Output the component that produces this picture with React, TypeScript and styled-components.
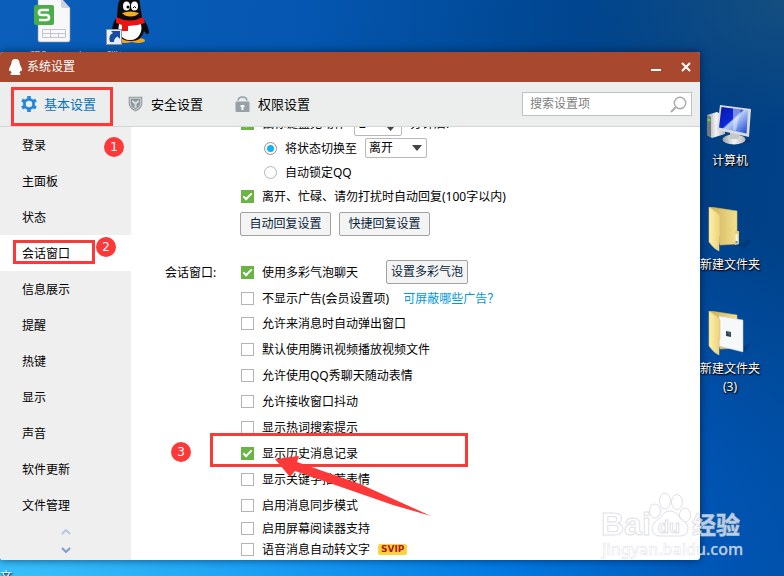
import React from 'react';
import styled, { createGlobalStyle, css } from 'styled-components';

const fontStack = '"Noto Sans", "Noto Sans CJK SC", sans-serif';
const red = '#fc3838';

const GlobalStyle = createGlobalStyle`
  *, *::before, *::after { box-sizing: border-box; }
  body {
    margin: 0;
    font-family: ${fontStack};
    font-size: 12px;
    line-height: 18px;
    color: #000;
  }
  button, input, select { font: inherit; color: inherit; }
  ul { list-style: none; margin: 0; padding: 0; }
`;

const Desktop = styled.div`
  position: relative;
  display: grid;
  grid-template-columns: minmax(0, 1fr) 84px;
  grid-template-rows: 52px auto minmax(16px, 1fr);
  min-height: 100vh;
  overflow: hidden;
  background:
    radial-gradient(ellipse 200px 130px at 100% 0%, rgba(50, 100, 120, 0.4) 0%, transparent 100%),
    radial-gradient(ellipse 130% 95% at 0% 103%, #3cc4fa 0%, #1a9ff5 26%, #0078e2 50%, rgba(0, 92, 196, 0.7) 72%, transparent 100%),
    linear-gradient(100deg, #0b5fba 0%, #0456b0 35%, #00458f 65%, #003f84 85%, #00438a 100%);
`;

const TopShortcuts = styled.div`
  display: flex;
  grid-column: 1 / -1;
  height: 52px;
  overflow: hidden;
`;

const TopShortcut = styled.div<{ $width: number }>`
  display: flex;
  flex: none;
  flex-direction: column;
  align-items: center;
  gap: 3px;
  width: ${(p) => p.$width}px;
  color: #fff;
  white-space: nowrap;
  svg { flex: none; }
`;

const SideShortcuts = styled.div`
  grid-column: 2;
  grid-row: 2;
  padding-top: 51px;
`;

const SideShortcut = styled.div`
  display: flex;
  flex-direction: column;
  align-items: center;
  gap: 1px;
  width: 60px;
  min-height: 104px;
  color: #fff;
  text-align: center;
  white-space: nowrap;
  text-shadow: 1px 1px 2px #000, 0 1px 1px #000;
`;

const BottomLabel = styled.div`
  grid-column: 1 / -1;
  height: 16px;
  padding-top: 8px;
  overflow: hidden;
  color: #fff;
  text-shadow: 1px 1px 2px #000;
`;

const Window = styled.main`
  grid-column: 1;
  grid-row: 2;
  display: flex;
  flex-direction: column;
  border-radius: 3px;
  overflow: hidden;
  background: #fff;
  box-shadow: 0 0 8px rgba(0, 10, 40, 0.6);
`;

const TitleBar = styled.header`
  display: flex;
  align-items: center;
  height: 30px;
  padding: 0 6px 0 8px;
  gap: 4px;
  background: #a8492f;
  color: #fff;
`;

const Title = styled.h1`
  flex: 1;
  margin: 0;
  font-size: 12px;
  font-weight: 400;
`;

const WindowButton = styled.button`
  display: grid;
  place-items: center;
  width: 16px;
  height: 16px;
  margin-left: 10px;
  padding: 0;
  border: 0;
  background: none;
`;

const TabBar = styled.nav`
  display: flex;
  align-items: center;
  gap: 32px;
  height: 45px;
  padding: 0 8px 0 21px;
  border-bottom: 1px solid #d4d6d6;
  background: #eceeee;
`;

const Tab = styled.button<{ $active?: boolean }>`
  display: flex;
  align-items: center;
  gap: 7px;
  padding: 0;
  border: 0;
  background: none;
  color: ${(p) => (p.$active ? '#0a72ba' : '#000')};
  font-size: 13px;
  white-space: nowrap;
`;

const Search = styled.label`
  display: flex;
  align-items: center;
  width: 170px;
  height: 24px;
  margin-left: auto;
  padding: 0 4px 0 7px;
  border: 1px solid #bfc1c1;
  background: #fff;
`;

const SearchInput = styled.input`
  flex: 1;
  min-width: 0;
  padding: 0;
  border: 0;
  outline: 0;
  background: none;
  &::placeholder { color: #808080; opacity: 1; }
`;

const Body = styled.div`
  display: flex;
  height: 433px;
`;

const Sidebar = styled.aside`
  flex: none;
  width: 131px;
  background: #efefef;
`;

const SideItem = styled.button<{ $active?: boolean }>`
  display: block;
  width: 100%;
  height: 36px;
  padding: 2px 22px 0;
  border: 0;
  background: ${(p) => (p.$active ? '#fff' : 'none')};
  text-align: left;
`;

const Scroller = styled.div`
  display: flex;
  flex-direction: column;
  align-items: center;
`;

const ScrollButton = styled.button`
  display: grid;
  place-items: center;
  width: 20px;
  height: 18px;
  padding: 0;
  border: 0;
  background: none;
`;

const Content = styled.section`
  display: flex;
  flex: 1;
  flex-direction: column;
  justify-content: flex-end;
  gap: 22px;
  min-width: 0;
  padding-left: 34px;
  overflow: hidden;
`;

const Group = styled.div`
  display: grid;
  grid-template-columns: 76px minmax(0, 1fr);
  margin: 0;
`;

const GroupLabel = styled.div`
  padding-top: 1px;
  line-height: 28px;
`;

const rowHeights = { tight: 20, compact: 22, small: 24, normal: 26, large: 28 };

const Row = styled.div<{ $size?: keyof typeof rowHeights; $indent?: boolean }>`
  display: flex;
  align-items: center;
  gap: 8px;
  height: ${(p) => rowHeights[p.$size ?? 'normal']}px;
  padding-left: ${(p) => (p.$indent ? 23 : 0)}px;
  white-space: nowrap;
`;

const ButtonRow = styled.div`
  display: flex;
  gap: 8px;
  padding-top: 4px;
  margin-left: -1px;
`;

const Choice = styled.label`
  display: flex;
  align-items: center;
  gap: 8px;
`;

const ChoiceText = styled.span`
  padding-top: 2px;
`;

const CheckInput = styled.input`
  display: grid;
  place-items: center;
  flex: none;
  width: 13px;
  height: 13px;
  margin: 0;
  border: 1px solid #b4b4b4;
  background: #fff;
  appearance: none;
  &:checked { border-color: #6ab344; background: #6ab344; }
  &:checked::after {
    content: '';
    width: 9px;
    height: 5px;
    border: solid #fff;
    border-width: 0 0 2px 2px;
    transform: translateY(-1px) rotate(-45deg);
  }
`;

const RadioInput = styled.input`
  display: grid;
  place-items: center;
  flex: none;
  width: 13px;
  height: 13px;
  margin: 0;
  border: 1px solid #b4b4b4;
  border-radius: 50%;
  background: #fff;
  appearance: none;
  &:checked { border-color: #909090; }
  &:checked::after {
    content: '';
    width: 7px;
    height: 7px;
    border-radius: 50%;
    background: #12b0f4;
  }
`;

const field = css`
  height: 20px;
  border: 1px solid #b8b8b8;
  border-radius: 2px;
  background: #fff;
`;

const FieldWrap = styled.span`
  position: relative;
  display: inline-flex;
  svg { position: absolute; pointer-events: none; }
`;

const Minutes = styled.input`
  ${field}
  width: 48px;
  height: 26px;
  padding: 0 4px;
`;

const StateSelect = styled.select`
  ${field}
  width: 62px;
  padding: 0 3px;
  line-height: 18px;
  appearance: none;
`;

const SpinArrow = styled.svg`
  right: 7px;
  bottom: 5px;
`;

const SelectArrow = styled.svg`
  right: 5px;
  top: 7px;
`;

const PushButton = styled.button<{ $wide?: boolean }>`
  height: 24px;
  min-width: ${(p) => (p.$wide ? 91 : 82)}px;
  padding: 0 4px;
  border: 1px solid #a2a2a2;
  border-radius: 2px;
  background: #f4f4f4;
  color: #08243c;
  line-height: 20px;
`;

const BubbleRow = styled(Row)`
  gap: 28px;
`;

const LinkRow = styled(Row)`
  gap: 14px;
`;

const HelpLink = styled.a`
  padding-top: 2px;
  color: #0099dd;
  text-decoration: none;
`;

const Vip = styled.span`
  height: 11px;
  padding: 0 3px;
  border-radius: 2px;
  background: #ffd040;
  color: #a81c10;
  font: 700 9px/11px "DejaVu Sans", sans-serif;
`;

const Marks = styled.div`
  position: absolute;
  inset: 0;
  pointer-events: none;
`;

const Frame = styled.div<{ $x: number; $y: number; $w: number; $h: number }>`
  position: absolute;
  left: ${(p) => p.$x}px;
  top: ${(p) => p.$y}px;
  width: ${(p) => p.$w}px;
  height: ${(p) => p.$h}px;
  border: 3px solid ${red};
`;

const Step = styled.div<{ $x: number; $y: number }>`
  position: absolute;
  left: ${(p) => p.$x}px;
  top: ${(p) => p.$y}px;
  width: 20px;
  height: 20px;
  border-radius: 50%;
  background: ${red};
  color: #fff;
  font: 12px/20px "DejaVu Sans", sans-serif;
  text-align: center;
`;

const Arrow = styled.svg`
  position: absolute;
  left: 270px;
  top: 450px;
`;

const Watermark = styled.svg`
  position: absolute;
  right: 36px;
  bottom: 14px;
`;

const SheetIcon = () => (
  <svg width="38" height="46" viewBox="0 0 38 46" aria-hidden="true">
    <path d="M4-2h23l9 10v32q0 2-2 2H6q-2 0-2-2z" fill="#f8f8fa" stroke="#8d98aa" strokeWidth=".6" />
    <path d="M27-1v7q0 2 2 2h7z" fill="#ced2dc" />
    <rect y="5" width="20" height="20" rx="2" fill="#48ae48" />
    <path d="M15 10H7.500q-2.500 0-2.500 2.500T7.500 15h5q2.500 0 2.500 2.500T12.500 20H5" fill="none" stroke="#fff" strokeWidth="2.600" />
    <path d="M8.500 29.500h23v8h-23zM8.500 33.500h23M16.500 29.500v8M24.500 33.500v4" fill="none" stroke="#c2c6cc" />
  </svg>
);

const QQIcon = () => (
  <svg width="44" height="46" viewBox="0 0 44 46" aria-hidden="true">
    <ellipse cx="19" cy="40.500" rx="8" ry="2.500" fill="#f3a51c" />
    <ellipse cx="32" cy="40.500" rx="7" ry="2.500" fill="#f3a51c" />
    <path d="M12 4Q14-4 24-4t10 8l2 13q7 9 7 16-2 3-5-2-2 10-13 10T10 31q-2 3-4 1 0-9 5-15z" fill="#0b0b0d" />
    <path d="M14 22q10 3 20 0 3 6 0 12-3 6-10 6t-10-6q-3-6 0-12z" fill="#fff" />
    <ellipse cx="20.500" cy="6" rx="3.500" ry="4.500" fill="#fff" />
    <ellipse cx="28.500" cy="6" rx="3.500" ry="4.500" fill="#fff" />
    <circle cx="22" cy="7" r="1.500" /><path d="M27 8q1.500-3 3 0" stroke="#000" fill="none" />
    <path d="M16 13q8.500-3 17 0-3 3.500-8.500 3.500T16 13z" fill="#f6ae20" />
    <path d="M10 17q14 7 27 0l2 6q-8 3-17 3v5h-6v-6l-6-2z" fill="#e91414" />
    <rect x=".5" y="29.500" width="15" height="15" fill="#e8eef6" stroke="#90989f" />
    <path d="M4 42q-2-7 3-9l-2-2h9v8l-2.500-2.500Q8 38 8 42z" fill="#164ca2" />
  </svg>
);

const ComputerIcon = () => (
  <svg width="48" height="48" viewBox="0 0 48 48" aria-hidden="true">
    <defs>
      <linearGradient id="screen" x2="1" y2="1">
        <stop stopColor="#0718a4" /><stop offset=".45" stopColor="#0c28d8" /><stop offset=".5" stopColor="#b9cff8" /><stop offset="1" stopColor="#123fd0" />
      </linearGradient>
      <linearGradient id="metal" x2="1"><stop stopColor="#9a9da0" /><stop offset=".5" stopColor="#f4f4f4" /><stop offset="1" stopColor="#b5b7b9" /></linearGradient>
    </defs>
    <path d="M1 12l10-3 8 4v18L6 35l-5-3z" fill="url(#metal)" />
    <path d="M1 12l4 2v20l-4-2z" fill="#74787c" /><circle cx="3" cy="17" r="1.300" fill="#54ef35" />
    <ellipse cx="31" cy="38" rx="14" ry="3" fill="#002a60" opacity=".5" />
    <ellipse cx="28" cy="36.500" rx="11.500" ry="5" fill="url(#metal)" />
    <path d="M24 29h9v7h-9z" fill="#c4c6c8" />
    <path d="M14 2l31 4-2 28-32-7z" fill="#d9dadb" />
    <path d="M15.500 4L42 7.500 40.500 30.500 13 24.500z" fill="url(#screen)" />
    <path d="M27 5.500l8 1-5 21-3-.6z" fill="#e9f1ff" opacity=".5" />
  </svg>
);

const FolderIcon = ({ paper }: { paper?: boolean }) => (
  <svg width="48" height="48" viewBox="0 0 48 48" aria-hidden="true">
    <defs>
      <linearGradient id="leaf" x2="1"><stop stopColor="#fff0a8" /><stop offset="1" stopColor="#ecd27c" /></linearGradient>
      <linearGradient id="back" x2="1"><stop stopColor="#cdb05a" /><stop offset="1" stopColor="#f5e18d" /></linearGradient>
    </defs>
    <path d="M32 38l13-6-7 10z" fill="#001d45" opacity=".3" />
    <path d="M4 0l27 4v33l-17 1z" fill="url(#back)" stroke="#d5bc68" strokeWidth=".6" />
    {paper ? (
      <>
        <path d="M13 5l24 4v32l-24-6z" fill="#f7f8fa" stroke="#c5cbd2" strokeWidth=".5" />
        <path d="M20 20l5 1v5l-5-1z" fill="#264a57" /><path d="M21 21l3 1v2z" fill="#bb3c83" />
      </>
    ) : (
      <>
        <path d="M29 24h4v13l-4 1z" fill="#e8cd6d" />
        <path d="M30.500 27v8" stroke="#fff" strokeWidth="2" /><path d="M30.500 34v2" stroke="#3a9cf1" strokeWidth="2" />
      </>
    )}
    <path d="M3 0q8 5 11 9v20h-1v15Q8 42 3 35z" fill="url(#leaf)" stroke="#dcc777" strokeWidth=".6" />
  </svg>
);

const PenguinIcon = () => (
  <svg width="15" height="18" viewBox="0 0 15 18" aria-hidden="true">
    <path d="M7.500 1C4.500 1 3.400 3 3.400 5.500 3 7.500 1 9.500 1 12q.4 2 1.500.5.400 1.500 1.200 2.300-1.700.5-1.200 1.700.5.500 2.500.5h5q2 0 2.500-.5.500-1.200-1.200-1.700.8-.8 1.200-2.300 1.100 1.500 1.500-.5c0-2.500-2-4.500-2.400-6.500C11.600 3 10.500 1 7.500 1z" fill="#fff" />
  </svg>
);

const GearIcon = () => (
  <svg width="16" height="16" viewBox="0 0 16 16" aria-hidden="true">
    <circle cx="8" cy="8" r="4.600" fill="none" stroke="#2388dc" strokeWidth="2.800" />
    {[0, 60, 120, 180, 240, 300].map((a) => (
      <path key={a} d="M6.200 0h3.600v3H6.200z" fill="#2388dc" transform={`rotate(${a} 8 8)`} />
    ))}
  </svg>
);

const ShieldIcon = () => (
  <svg width="16" height="16" viewBox="0 0 16 16" aria-hidden="true">
    <path d="M.7.700h13.600V8q-.5 4.500-6.800 7.500Q1.200 12.500.7 8z" fill="#8e969c" />
    <path d="M2.200 2.200h10.600V8q-.5 3.500-5.300 6Q2.700 11.500 2.200 8z" fill="none" stroke="#d5dadd" />
    <path d="M4 4l3.500 2L11 4v2L8.500 8v4h-2V8L4 6z" fill="#d5dadd" />
  </svg>
);

const LockIcon = () => (
  <svg width="16" height="16" viewBox="0 0 16 16" aria-hidden="true">
    <path d="M3 4.500Q3.500 1 7.500 1T12 4.500" fill="none" stroke="#96a0a6" strokeWidth="1.700" />
    <rect x=".5" y="5.500" width="14" height="10.500" rx="1" fill="#96a0a6" />
    <path d="M5.500 9h4v2H8.600v3H6.400v-3h-.9z" fill="#f3f4f5" />
  </svg>
);

const SearchIcon = () => (
  <svg width="17" height="17" viewBox="0 0 17 17" aria-hidden="true">
    <circle cx="10" cy="7" r="5.700" fill="none" stroke="#aaa" strokeWidth="1.400" />
    <path d="M6 11l-5 5" stroke="#aaa" strokeWidth="2" />
  </svg>
);

const sections = ['登录', '主面板', '状态', '会话窗口', '信息展示', '提醒', '热键', '显示', '声音', '软件更新', '文件管理'];

const Check = ({ label, checked = false }: { label: string; checked?: boolean }) => (
  <Choice>
    <CheckInput type="checkbox" defaultChecked={checked} />
    <ChoiceText>{label}</ChoiceText>
  </Choice>
);

const Radio = ({ label, checked = false }: { label: string; checked?: boolean }) => (
  <Choice>
    <RadioInput type="radio" name="idle" defaultChecked={checked} />
    <ChoiceText>{label}</ChoiceText>
  </Choice>
);

const chatOptions = [
  { label: '允许来消息时自动弹出窗口' },
  { label: '默认使用腾讯视频播放视频文件' },
  { label: '允许使用QQ秀聊天随动表情' },
  { label: '允许接收窗口抖动' },
  { label: '显示热词搜索提示' },
  { label: '显示历史消息记录', checked: true },
  { label: '显示关键字推荐表情' },
  { label: '启用消息同步模式' },
];

export default function App() {
  return (
    <>
      <GlobalStyle />
      <Desktop>
        <TopShortcuts>
          <TopShortcut $width={106}><SheetIcon />工程限价明细</TopShortcut>
          <TopShortcut $width={44}><QQIcon />腾讯QQ</TopShortcut>
        </TopShortcuts>

        <Window>
          <TitleBar>
            <PenguinIcon />
            <Title>系统设置</Title>
            <WindowButton aria-label="最小化">
              <svg width="10" height="10" viewBox="0 0 10 10"><path d="M0 8h10" stroke="#fff" strokeWidth="2" /></svg>
            </WindowButton>
            <WindowButton aria-label="关闭">
              <svg width="10" height="10" viewBox="0 0 10 10"><path d="M1 1l8 8M9 1L1 9" stroke="#fff" strokeWidth="2" /></svg>
            </WindowButton>
          </TitleBar>

          <TabBar>
            <Tab $active><GearIcon />基本设置</Tab>
            <Tab><ShieldIcon />安全设置</Tab>
            <Tab><LockIcon />权限设置</Tab>
            <Search>
              <SearchInput type="text" placeholder="搜索设置项" aria-label="搜索设置项" />
              <SearchIcon />
            </Search>
          </TabBar>

          <Body>
            <Sidebar>
              <ul>
                {sections.map((s) => (
                  <li key={s}><SideItem $active={s === '会话窗口'}>{s}</SideItem></li>
                ))}
              </ul>
              <Scroller>
                <ScrollButton aria-label="向上">
                  <svg width="10" height="6" viewBox="0 0 10 6"><path d="M1 5l4-4 4 4" fill="none" stroke="#b4c6e0" strokeWidth="2" /></svg>
                </ScrollButton>
                <ScrollButton aria-label="向下">
                  <svg width="10" height="6" viewBox="0 0 10 6"><path d="M1 1l4 4 4-4" fill="none" stroke="#7c9fce" strokeWidth="2" /></svg>
                </ScrollButton>
              </Scroller>
            </Sidebar>

            <Content>
              <Group>
                <GroupLabel />
                <div>
                  <Row>
                    <Check label="鼠标键盘无动作" checked />
                    <FieldWrap>
                      <Minutes type="text" defaultValue="2" aria-label="分钟" />
                      <SpinArrow width="9" height="5" viewBox="0 0 9 5"><path d="M0 0h9L4.500 5z" fill="#444" /></SpinArrow>
                    </FieldWrap>
                    <ChoiceText>分钟后:</ChoiceText>
                  </Row>
                  <Row $size="small" $indent>
                    <Radio label="将状态切换至" checked />
                    <FieldWrap>
                      <StateSelect aria-label="状态" defaultValue="离开"><option>离开</option></StateSelect>
                      <SelectArrow width="10" height="6" viewBox="0 0 10 6"><path d="M0 0h10L5 6z" fill="#444" /></SelectArrow>
                    </FieldWrap>
                  </Row>
                  <Row $size="small" $indent><Radio label="自动锁定QQ" /></Row>
                  <Row $size="small"><Check label="离开、忙碌、请勿打扰时自动回复(100字以内)" checked /></Row>
                  <ButtonRow>
                    <PushButton $wide>自动回复设置</PushButton>
                    <PushButton $wide>快捷回复设置</PushButton>
                  </ButtonRow>
                </div>
              </Group>

              <Group>
                <GroupLabel>会话窗口:</GroupLabel>
                <div>
                  <BubbleRow $size="large">
                    <Check label="使用多彩气泡聊天" checked />
                    <PushButton>设置多彩气泡</PushButton>
                  </BubbleRow>
                  <LinkRow $size="small">
                    <Check label="不显示广告(会员设置项)" />
                    <HelpLink href="#ads">可屏蔽哪些广告？</HelpLink>
                  </LinkRow>
                  {chatOptions.map((o) => (
                    <Row key={o.label}><Check {...o} /></Row>
                  ))}
                  <Row $size="tight"><Check label="启用屏幕阅读器支持" /></Row>
                  <Row $size="compact"><Check label="语音消息自动转文字" /><Vip>SVIP</Vip></Row>
                </div>
              </Group>
            </Content>
          </Body>
        </Window>

        <SideShortcuts>
          <SideShortcut><ComputerIcon />计算机</SideShortcut>
          <SideShortcut><FolderIcon />新建文件夹</SideShortcut>
          <SideShortcut><FolderIcon paper /><span>新建文件夹<br />(3)</span></SideShortcut>
        </SideShortcuts>

        <BottomLabel>文</BottomLabel>

        <Marks>
          <Frame $x={11} $y={87} $w={102} $h={39} />
          <Frame $x={13} $y={240} $w={82} $h={24} />
          <Frame $x={210} $y={433} $w={258} $h={34} />
          <Step $x={104} $y={137}>1</Step>
          <Step $x={96} $y={237}>2</Step>
          <Step $x={171} $y={442}>3</Step>
          <Arrow width="162" height="68" viewBox="0 0 162 68" aria-hidden="true">
            <path d="M5 9l24-3-2 6 63 22 71 32-38-11-98-34-5 6z" fill={red} />
          </Arrow>
          <Watermark width="148" height="74" viewBox="0 0 148 74" role="img" aria-label="Baidu 经验">
            <g fill="#fff" fillOpacity=".72" stroke="#c9ccd2" strokeOpacity=".6" strokeWidth="1">
              <text x="1" y="47" fontFamily="Liberation Sans" fontWeight="700" fontSize="32">Bai</text>
              <ellipse cx="55" cy="23" rx="5.500" ry="7" />
              <ellipse cx="65" cy="13" rx="5.500" ry="8" />
              <ellipse cx="77" cy="14" rx="5.500" ry="7.500" />
              <ellipse cx="85" cy="27" rx="5.500" ry="7" />
              <path d="M70 23q6 0 10 7 8 5 8 10 0 8-8 8H60q-8 0-8-8 0-5 8-10 4-7 10-7z" />
              <text x="58" y="45" fontFamily="Liberation Sans" fontWeight="700" fontSize="18">du</text>
              <text x="92" y="46" fontFamily="Noto Sans CJK SC" fontWeight="700" fontSize="24">经验</text>
              <text x="2" y="67" fontFamily="Noto Sans" fontWeight="500" fontSize="16" strokeWidth=".5">jingyan.baidu.com</text>
            </g>
          </Watermark>
        </Marks>
      </Desktop>
    </>
  );
}
